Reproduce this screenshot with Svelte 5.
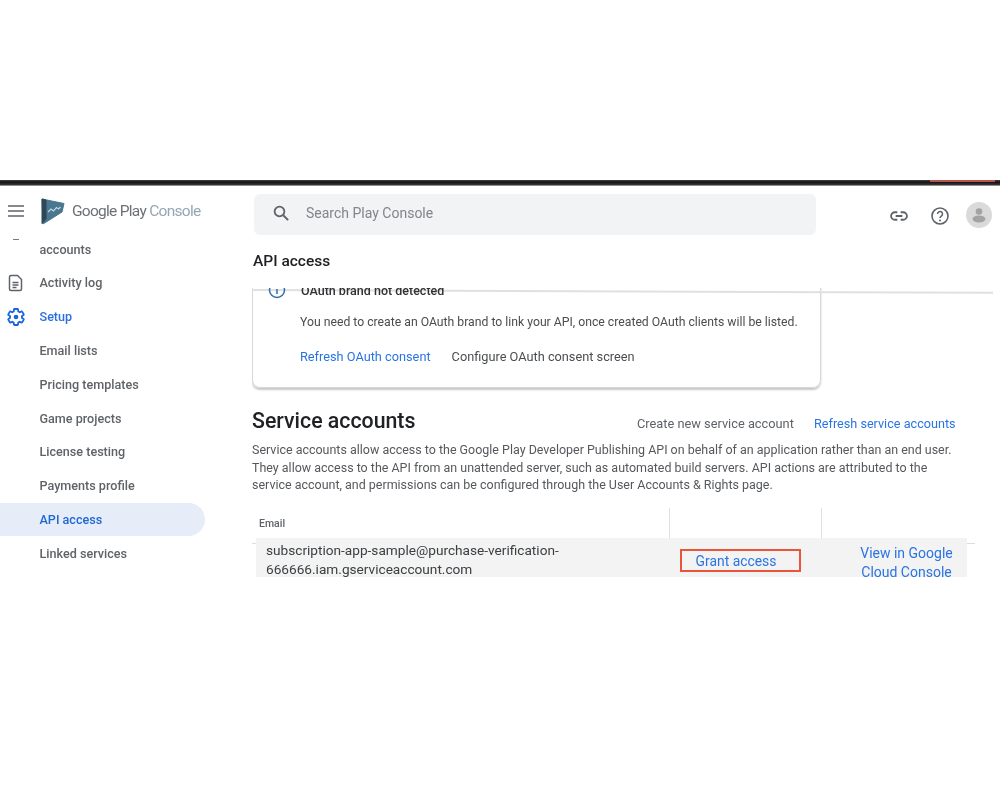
<script>
	const navItems = [
		{ label: 'Email lists' },
		{ label: 'Pricing templates' },
		{ label: 'Game projects' },
		{ label: 'License testing' },
		{ label: 'Payments profile' },
		{ label: 'API access', active: true },
		{ label: 'Linked services' },
	]
</script>

<div class="shot">
	<div class="edge"><span class="edge-red"></span></div>

	<header class="topbar">
		<button class="menu" aria-label="Menu">
			<svg width="16" height="12" viewBox="0 0 16 12">
				<path d="M0 1h16M0 6h16M0 11h16" stroke="#5f6368" stroke-width="1.7" />
			</svg>
		</button>
		<div class="logo">
			<svg width="25" height="27" viewBox="0 0 25 27">
				<path d="M1 1l22 4.500-2 8.500L2 26z" fill="#4a7790" stroke="#4a7790" stroke-linejoin="round" />
				<path d="M1 1l4 1v19l-4 4.500z" fill="#2f4858" stroke="#2f4858" stroke-linejoin="round" />
				<path d="M7 14l3-3 2.500 2 3-3.500 2 1.500 2-2" fill="none" stroke="#c4d4de" stroke-width="1.200" />
			</svg>
			<span class="brand">Google Play <span class="brand-light">Console</span></span>
		</div>
		<div class="search">
			<svg width="18" height="18" viewBox="0 0 24 24">
				<circle cx="10" cy="10" r="6.500" fill="none" stroke="#5f6368" stroke-width="2.400" />
				<path d="M15 15l6.500 6.500" stroke="#5f6368" stroke-width="2.600" />
			</svg>
			<span>Search Play Console</span>
		</div>
		<div class="actions">
			<svg class="link" width="20" height="20" viewBox="0 0 24 24">
				<path
					d="M10 7.500H7a4.500 4.500 0 0 0 0 9h3M14 7.500h3a4.500 4.500 0 0 1 0 9h-3M8 12h8"
					fill="none"
					stroke="#5f6368"
					stroke-width="2.200"
				/>
			</svg>
			<svg class="help" width="20" height="20" viewBox="0 0 20 20">
				<circle cx="10" cy="10" r="8" fill="none" stroke="#5f6368" stroke-width="1.600" />
				<path
					d="M7.500 8a2.500 2.500 0 1 1 3.800 2.100c-.9.600-1.300 1-1.300 2"
					fill="none"
					stroke="#5f6368"
					stroke-width="1.500"
				/>
				<circle cx="10" cy="14.500" r="1" fill="#5f6368" />
			</svg>
			<div class="avatar">
				<svg width="26" height="26" viewBox="0 0 26 26">
					<circle cx="13" cy="9.500" r="3.300" fill="#a3a3a3" />
					<ellipse cx="13" cy="17" rx="6.500" ry="3.500" fill="#a3a3a3" />
				</svg>
			</div>
		</div>
	</header>

	<div class="body">
		<nav class="sidebar">
			<div class="dash"></div>
			<div class="nav-row first"><span class="nav-text">accounts</span></div>
			<div class="nav-row">
				<svg class="nav-icon" width="18" height="18" viewBox="0 0 18 18">
					<path
						d="M4 1.500h6.500l4 4V15a1.500 1.500 0 0 1-1.500 1.500H4A1.500 1.500 0 0 1 2.500 15V3A1.500 1.500 0 0 1 4 1.500zM5.500 8.500h6M5.500 11h6M5.500 13.500h4"
						fill="none"
						stroke="#5f6368"
						stroke-width="1.500"
					/>
				</svg>
				<span class="nav-text">Activity log</span>
			</div>
			<div class="nav-row setup">
				<svg class="nav-icon gear" width="20" height="20" viewBox="0 0 24 24">
					<path
						d="M19.140 12.940c.04-.3.060-.61.060-.94 0-.32-.02-.64-.07-.94l2.030-1.580c.18-.14.23-.41.120-.61l-1.920-3.320c-.12-.22-.37-.29-.59-.22l-2.390.960c-.5-.38-1.030-.7-1.620-.94l-.36-2.540c-.04-.24-.24-.41-.48-.41h-3.840c-.24 0-.43.170-.47.410l-.36 2.540c-.59.240-1.130.570-1.620.940l-2.390-.96c-.22-.08-.47 0-.59.220L2.740 8.870c-.12.210-.08.470.120.610l2.030 1.580c-.05.300-.09.630-.09.940s.02.640.070.940l-2.030 1.580c-.18.140-.23.410-.12.610l1.920 3.320c.12.220.37.290.59.220l2.390-.96c.5.380 1.030.7 1.620.94l.36 2.540c.05.240.24.410.48.410h3.840c.24 0 .44-.17.47-.41l.36-2.540c.59-.24 1.130-.56 1.620-.94l2.390.96c.22.080.47 0 .59-.22l1.920-3.320c.12-.22.070-.47-.12-.61z"
						fill="none"
						stroke="#1a66d8"
						stroke-width="2.200"
					/>
					<circle cx="12" cy="12" r="2.800" fill="#1a66d8" />
				</svg>
				<span class="nav-text">Setup</span>
			</div>
			{#each navItems as item}
				<div class="nav-row" class:active={item.active}>
					<span class="nav-text">{item.label}</span>
				</div>
			{/each}
		</nav>

		<main class="content">
			<h1>API access</h1>
			<div class="scroller">
				<section class="card">
					<div class="card-title">
						<svg width="18" height="18" viewBox="0 0 18 18">
							<circle cx="9" cy="9" r="7.500" fill="none" stroke="#2f6ea8" stroke-width="1.500" />
							<path d="M9 8v5" stroke="#2f6ea8" stroke-width="1.500" />
						</svg>
						<span>OAuth brand not detected</span>
					</div>
					<p>You need to create an OAuth brand to link your API, once created OAuth clients will be listed.</p>
					<div class="card-links">
						<span class="blue">Refresh OAuth consent</span>
						<span>Configure OAuth consent screen</span>
					</div>
				</section>

				<section class="accounts">
					<div class="accounts-head">
						<h2>Service accounts</h2>
						<span class="create">Create new service account</span>
						<span class="blue refresh">Refresh service accounts</span>
					</div>
					<p class="desc">
						Service accounts allow access to the Google Play Developer Publishing API on behalf of an application rather than an end user.<br />
						They allow access to the API from an unattended server, such as automated build servers. API actions are attributed to the<br />
						service account, and permissions can be configured through the User Accounts &amp; Rights page.
					</p>
					<div class="table">
						<div class="thead">
							<div class="th email-col">Email</div>
							<div class="th grant-col"></div>
							<div class="th view-col"></div>
						</div>
						<div class="tr">
							<div class="email-col address">subscription-app-sample@purchase-verification-<br />666666.iam.gserviceaccount.com</div>
							<div class="grant-col"><span class="grant blue">Grant access</span></div>
							<div class="view-col blue">View in Google Cloud Console</div>
						</div>
					</div>
				</section>
			</div>
		</main>
	</div>
</div>

<style>
	:global(body) {
		background: #fff;
		font-family: Roboto, 'Liberation Sans', sans-serif;
	}

	.shot {
		margin-top: 180px;
		height: 397px;
		overflow: hidden;
		background: #fff;
		filter: blur(0.45px);
	}

	.edge {
		height: 6px;
		background: linear-gradient(#444 0, #111 35%, #333 75%, #bbb 100%);
		position: relative;
	}

	.edge-red {
		position: absolute;
		left: 930px;
		top: 0;
		width: 65px;
		height: 2px;
		background: #b5544c;
	}

	.topbar {
		height: 63px;
		display: flex;
		align-items: center;
		padding: 2px 0 6px;
		box-sizing: border-box;
	}

	.menu {
		width: 41px;
		margin-top: -9px;
		padding: 0 0 0 8px;
		border: 0;
		background: none;
		display: flex;
		box-sizing: border-box;
	}

	.logo {
		width: 213px;
		margin-top: -9px;
		display: flex;
		align-items: center;
		gap: 6px;
	}

	.brand {
		font-size: 15.500px;
		letter-spacing: -0.72px;
		color: #6d7175;
		white-space: nowrap;
	}

	.brand-light {
		color: #93a7b5;
	}

	.search {
		width: 562px;
		height: 41px;
		margin-top: -2px;
		padding: 0 0 3px 18px;
		display: flex;
		align-items: center;
		gap: 16px;
		box-sizing: border-box;
		background: #f1f3f4;
		border-radius: 6px;
		color: #80868b;
		font-size: 14px;
	}

	.actions {
		display: flex;
		align-items: center;
		margin-left: 73px;
	}

	.link {
		margin-right: 21px;
	}

	.help {
		margin-right: 16px;
	}

	.avatar {
		width: 26px;
		height: 26px;
		border-radius: 50%;
		background: #dadada;
		margin-top: -1px;
	}

	.body {
		display: grid;
		grid-template-columns: 252px 1fr;
	}

	.sidebar {
		position: relative;
		margin-top: -17px;
		color: #5f6368;
		font-size: 12.600px;
		font-weight: 500;
	}

	.dash {
		position: absolute;
		left: 13px;
		top: 6.500px;
		width: 6px;
		height: 1.500px;
		background: #777;
	}

	.nav-row {
		height: 33.800px;
		width: 205px;
		display: flex;
		align-items: center;
		padding-left: 39.500px;
		box-sizing: border-box;
		position: relative;
		border-radius: 0 17px 17px 0;
	}

	.nav-row.first {
		height: 34px;
	}

	.nav-icon {
		position: absolute;
		left: 7px;
	}

	.nav-icon.gear {
		left: 6px;
	}

	.setup {
		color: #2a6fe0;
	}

	.active {
		background: #e6edf9;
		color: #1f68d2;
	}

	.content {
		position: relative;
		padding-right: 7px;
	}

	h1 {
		margin: 0;
		height: 39px;
		padding: 1px 0 0 1px;
		box-sizing: border-box;
		font-size: 15.500px;
		line-height: 22px;
		font-weight: 500;
		color: #202124;
	}

	.scroller {
		position: relative;
		height: 304px;
		overflow: hidden;
	}

	/* the header rule, slightly off level like the screenshot */
	.scroller::before {
		content: '';
		position: absolute;
		left: 0;
		top: 0.500px;
		width: 741px;
		height: 1.500px;
		background: #e0e0e0;
		transform: rotate(0.22deg);
		transform-origin: left center;
	}

	.card {
		margin-top: -6px;
		width: 569px;
		height: 106px;
		padding: 0 0 0 16px;
		box-sizing: border-box;
		border: 1px solid #d8d8d8;
		border-radius: 0 0 8px 8px;
		box-shadow: 0 1.500px 2px rgba(0, 0, 0, 0.22);
		font-size: 12.230px;
		color: #4a4d50;
	}

	.card-title {
		position: relative;
		height: 20px;
		display: flex;
		align-items: center;
		gap: 15px;
		margin: -3px 0 0 -1px;
		font-weight: 500;
		font-size: 12.500px;
		color: #303134;
	}

	.card p {
		margin: 13px 0 0 31px;
		line-height: 18px;
		white-space: nowrap;
	}

	.card-links {
		display: flex;
		gap: 21px;
		margin: 17px 0 0 31px;
		font-size: 12.750px;
		line-height: 18px;
	}

	.blue {
		color: #2a74e2;
	}

	.accounts {
		padding-top: 18px;
	}

	.accounts-head {
		display: flex;
		align-items: center;
		height: 28px;
		font-size: 12.800px;
		color: #5f6368;
	}

	h2 {
		margin: 0;
		width: 385px;
		font-size: 21.300px;
		font-weight: 500;
		color: #202124;
	}

	.create {
		width: 177px;
		flex: none;
		padding-top: 6px;
	}

	.refresh {
		white-space: nowrap;
		font-size: 12.650px;
		padding-top: 6px;
	}

	.desc {
		margin: 7px 0 0;
		font-size: 12.470px;
		line-height: 17.500px;
		color: #55585c;
		white-space: nowrap;
	}

	.table {
		position: relative;
		margin-top: 14px;
		width: 723px;
	}

	/* row rule that sticks out past the grey row on both sides */
	.table::after {
		content: '';
		position: absolute;
		left: 0;
		top: 35px;
		width: 723px;
		height: 1px;
		background: #ddd;
	}

	.thead {
		display: flex;
		height: 30px;
		padding-left: 4px;
		box-sizing: border-box;
	}

	.th {
		height: 30px;
		font-size: 10.500px;
		font-weight: 500;
		color: #5f6368;
		box-sizing: border-box;
		padding-top: 9px;
	}

	.email-col {
		width: 414px;
		box-sizing: border-box;
	}

	.grant-col {
		width: 152px;
		box-sizing: border-box;
	}

	.view-col {
		width: 145px;
		box-sizing: border-box;
	}

	.th.email-col {
		padding-left: 3px;
		border-right: 1.500px solid #e0e0e0;
	}

	.th.grant-col {
		border-right: 1.500px solid #e0e0e0;
	}

	.tr {
		position: relative;
		z-index: 1;
		display: flex;
		height: 40px;
		margin-left: 4px;
		width: 711px;
		background: #f3f3f3;
		overflow: hidden;
	}

	.address {
		padding: 3px 0 0 10px;
		font-size: 13.650px;
		line-height: 19px;
		color: #3c4043;
		white-space: nowrap;
	}

	.tr .grant-col {
		padding: 11px 0 0 10px;
	}

	.grant {
		display: block;
		width: 121px;
		height: 23px;
		box-sizing: border-box;
		border: 2px solid #e8553a;
		padding-right: 9px;
		font-size: 13.900px;
		line-height: 21px;
		text-align: center;
	}

	.tr .view-col {
		padding: 6px 0 0 24px;
		font-size: 14px;
		line-height: 19px;
		text-align: center;
	}
</style>
